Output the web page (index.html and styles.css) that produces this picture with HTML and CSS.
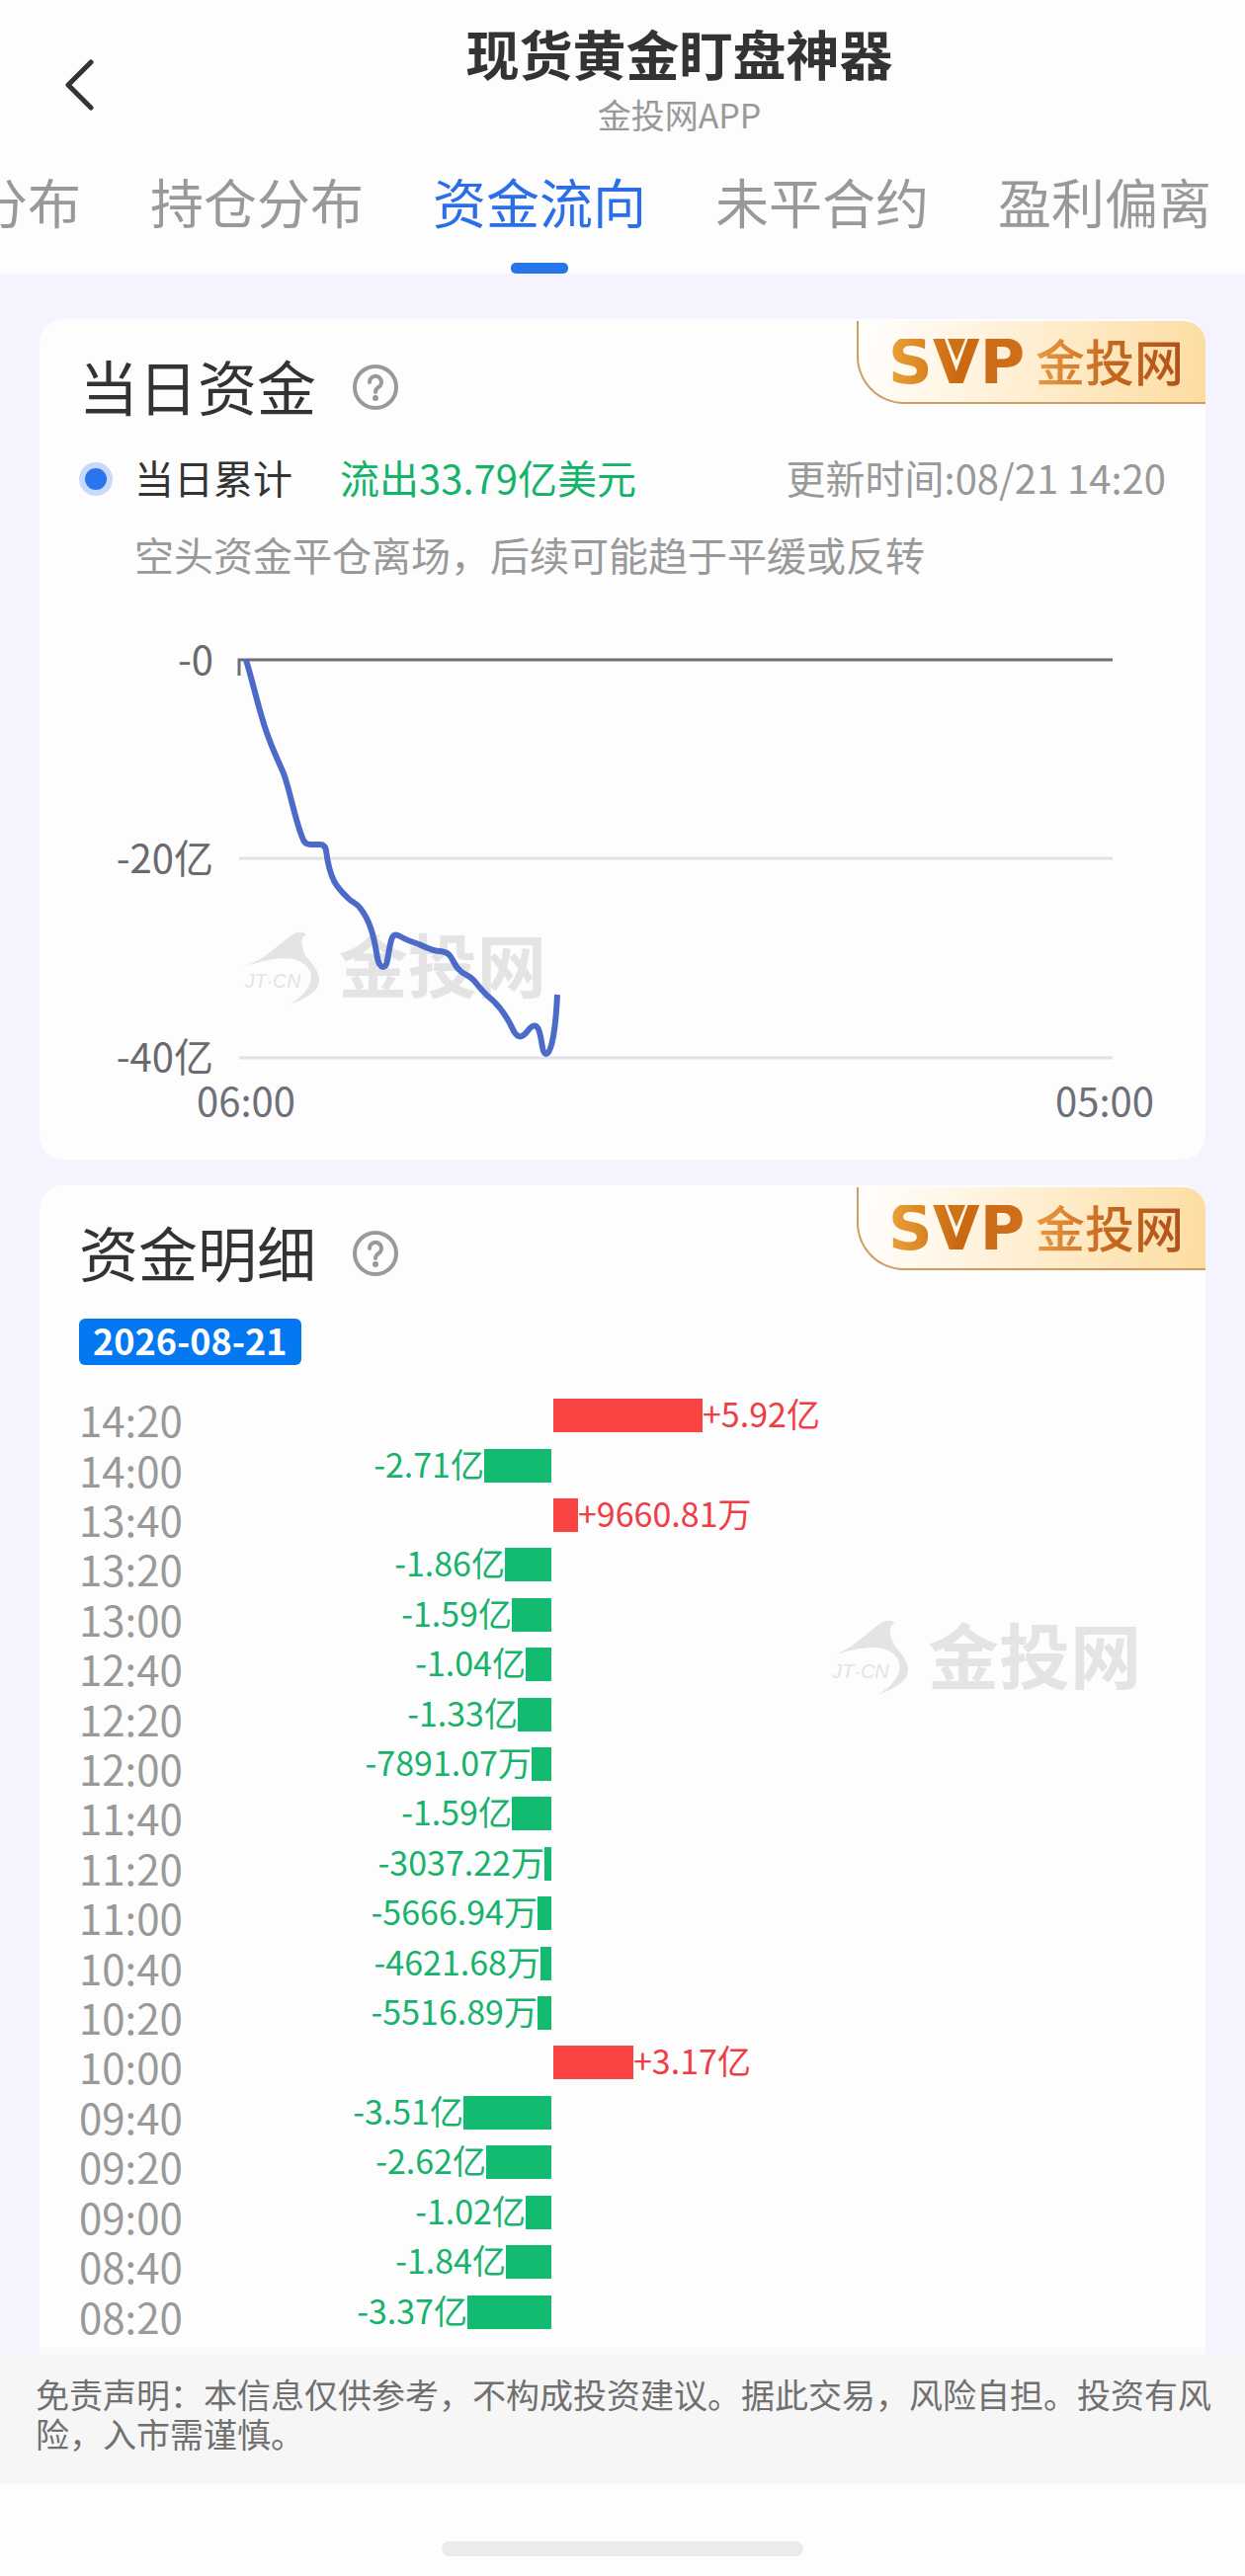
FILE: index.html
```html
<!DOCTYPE html>
<html lang="zh-CN">
<head>
    <meta charset="UTF-8">
    <meta name="viewport" content="width=device-width, initial-scale=1.0">
    <title>现货黄金盯盘神器</title>
    <link rel="stylesheet" href="styles.css">
</head>
<body>

    <header class="header">
        <div class="title-bar">
            <button class="back" type="button" aria-label="返回">
                <svg width="32" height="52" viewBox="0 0 32 52"><path d="M28 3L5 26L28 49" fill="none" stroke="#333" stroke-width="5" stroke-linecap="round" stroke-linejoin="round"/></svg>
            </button>
            <div class="titles">
                <h1>现货黄金盯盘神器</h1>
                <p>金投网APP</p>
            </div>
        </div>
        <nav class="tabs">
            <a href="#">分布</a>
            <a href="#">持仓分布</a>
            <a href="#" class="active" aria-current="page">资金流向</a>
            <a href="#">未平合约</a>
            <a href="#">盈利偏离</a>
        </nav>
    </header>

    <main class="content">

        <!-- Today's flow -->
        <section class="card">
            <div class="badge">
                <svg width="146" height="46" viewBox="0 0 146 46">
                    <defs>
                        <linearGradient id="gold" gradientUnits="userSpaceOnUse" x1="0" y1="0" x2="146" y2="0">
                            <stop offset="0" stop-color="#eda53a"/>
                            <stop offset="0.5" stop-color="#c96a12"/>
                            <stop offset="1" stop-color="#cf6f1c"/>
                        </linearGradient>
                    </defs>
                    <text class="svp-text" x="3" y="45">SVP</text>
                    <path d="M63 0H81L72 22Z" fill="#cd7216"/>
                </svg>
                <span>金投网</span>
            </div>
            <div class="card-title">
                <h2>当日资金</h2>
                <button type="button" aria-label="当日资金说明">
                    <svg width="48" height="48" viewBox="0 0 48 48">
                        <circle cx="24" cy="24" r="21" fill="none" stroke="#999" stroke-width="4"/>
                        <path d="M18 19a6 6 0 1 1 9 5q-3 2-3 5" fill="none" stroke="#999" stroke-width="4" stroke-linecap="round"/>
                        <circle cx="24" cy="35" r="3" fill="#999"/>
                    </svg>
                </button>
            </div>
            <div class="summary">
                <span class="dot"></span>
                <span class="summary-label">当日累计</span>
                <strong>流出33.79亿美元</strong>
                <time>更新时间:08/21 14:20</time>
            </div>
            <p class="hint">空头资金平仓离场，后续可能趋于平缓或反转</p>

            <svg class="chart" viewBox="0 0 1100 500" role="img" aria-label="当日资金走势">
                <svg x="166" y="302" width="308" height="76" viewBox="0 0 316 78">
                    <path class="wm-shape" d="M0 38Q16 32 25 25Q38 15 50 5Q58 -1 66 4Q60 6 61 15Q62 22 66 28C84 47 88 63 48 77C74 62 76 42 62 34C50 25 26 29 0 38Z"/>
                    <text class="wm-domain" x="2" y="60">JT·CN</text>
                    <text class="wm-name" x="99" y="65">金投网</text>
                </svg>
                <path class="grid" d="M162 229H1046M162 431H1046"/>
                <path class="axis" d="M162 44V28H1046"/>
                <path class="line" d="M169 28C175 48 179 66 185 86C192 112 200 126 207 143C214 162 218 188 226 208Q228 215 234 215L244 215Q249 215 250 221C254 253 262 259 273 270C277 274 281 274 285 280C294 292 298 305 302 330C304 341 311 342 312 332C316 310 316 303 325 308C332 312 335 313 344 316C358 322 360 323 366 323C380 325 376 335 386 343C391 348 394 346 400 353C410 366 412 367 420 374C430 384 435 393 440 404C444 411 448 411 453 405C458 398 462 396 465 402C469 412 468 427 473 427C477 427 482 410 484 367"/>
                <g class="y-labels">
                    <text x="136" y="43">-0</text>
                    <text x="136" y="244">-20亿</text>
                    <text x="136" y="445">-40亿</text>
                </g>
                <g class="x-labels">
                    <text x="169" y="490">06:00</text>
                    <text x="1038" y="490">05:00</text>
                </g>
            </svg>
        </section>

        <!-- Flow details -->
        <section class="card details">
            <div class="badge">
                <svg width="146" height="46" viewBox="0 0 146 46">
                    <text class="svp-text" x="3" y="45">SVP</text>
                    <path d="M63 0H81L72 22Z" fill="#cd7216"/>
                </svg>
                <span>金投网</span>
            </div>
            <div class="card-title">
                <h2>资金明细</h2>
                <button type="button" aria-label="资金明细说明">
                    <svg width="48" height="48" viewBox="0 0 48 48">
                        <circle cx="24" cy="24" r="21" fill="none" stroke="#999" stroke-width="4"/>
                        <path d="M18 19a6 6 0 1 1 9 5q-3 2-3 5" fill="none" stroke="#999" stroke-width="4" stroke-linecap="round"/>
                        <circle cx="24" cy="35" r="3" fill="#999"/>
                    </svg>
                </button>
            </div>
            <time class="date">2026-08-21</time>
            <svg class="watermark" width="316" height="78" viewBox="0 0 316 78" aria-hidden="true">
                <path class="wm-shape" d="M0 38Q16 32 25 25Q38 15 50 5Q58 -1 66 4Q60 6 61 15Q62 22 66 28C84 47 88 63 48 77C74 62 76 42 62 34C50 25 26 29 0 38Z"/>
                <text class="wm-domain" x="2" y="60">JT·CN</text>
                <text class="wm-name" x="99" y="65">金投网</text>
            </svg>

            <table class="flows">
                <colgroup><col class="col-time"><col class="col-out"><col></colgroup>
                <tbody>
                    <tr><th scope="row">14:20</th><td></td><td class="in"><div><i style="width: 151px"></i>+5.92亿</div></td></tr>
                    <tr><th scope="row">14:00</th><td class="out"><div>-2.71亿<i style="width: 68px"></i></div></td><td></td></tr>
                    <tr><th scope="row">13:40</th><td></td><td class="in"><div><i style="width: 25px"></i>+9660.81万</div></td></tr>
                    <tr><th scope="row">13:20</th><td class="out"><div>-1.86亿<i style="width: 47px"></i></div></td><td></td></tr>
                    <tr><th scope="row">13:00</th><td class="out"><div>-1.59亿<i style="width: 40px"></i></div></td><td></td></tr>
                    <tr><th scope="row">12:40</th><td class="out"><div>-1.04亿<i style="width: 26px"></i></div></td><td></td></tr>
                    <tr><th scope="row">12:20</th><td class="out"><div>-1.33亿<i style="width: 34px"></i></div></td><td></td></tr>
                    <tr><th scope="row">12:00</th><td class="out"><div>-7891.07万<i style="width: 20px"></i></div></td><td></td></tr>
                    <tr><th scope="row">11:40</th><td class="out"><div>-1.59亿<i style="width: 40px"></i></div></td><td></td></tr>
                    <tr><th scope="row">11:20</th><td class="out"><div>-3037.22万<i style="width: 7px"></i></div></td><td></td></tr>
                    <tr><th scope="row">11:00</th><td class="out"><div>-5666.94万<i style="width: 14px"></i></div></td><td></td></tr>
                    <tr><th scope="row">10:40</th><td class="out"><div>-4621.68万<i style="width: 11px"></i></div></td><td></td></tr>
                    <tr><th scope="row">10:20</th><td class="out"><div>-5516.89万<i style="width: 14px"></i></div></td><td></td></tr>
                    <tr><th scope="row">10:00</th><td></td><td class="in"><div><i style="width: 81px"></i>+3.17亿</div></td></tr>
                    <tr><th scope="row">09:40</th><td class="out"><div>-3.51亿<i style="width: 89px"></i></div></td><td></td></tr>
                    <tr><th scope="row">09:20</th><td class="out"><div>-2.62亿<i style="width: 66px"></i></div></td><td></td></tr>
                    <tr><th scope="row">09:00</th><td class="out"><div>-1.02亿<i style="width: 26px"></i></div></td><td></td></tr>
                    <tr><th scope="row">08:40</th><td class="out"><div>-1.84亿<i style="width: 46px"></i></div></td><td></td></tr>
                    <tr><th scope="row">08:20</th><td class="out"><div>-3.37亿<i style="width: 85px"></i></div></td><td></td></tr>
                </tbody>
            </table>
        </section>
    </main>

    <footer class="disclaimer">
        <p>免责声明：本信息仅供参考，不构成投资建议。据此交易，风险自担。投资有风险，入市需谨慎。</p>
    </footer>
    <div class="home-bar"><span></span></div>

</body>
</html>
```

FILE: styles.css
```css
* {
    box-sizing: border-box;
}

body {
    margin: 0;
    background-color: #fdfdfd;
    color: #333;
    font-family: "Noto Sans CJK SC", sans-serif;
    font-size: 40px;
}

h1, h2, p {
    margin: 0;
}

button {
    display: flex;
    padding: 0;
    border: none;
    background: none;
    cursor: pointer;
}

/* Header */
.header {
    background-color: #fdfdfd;
    border-radius: 0 0 10px 10px;
    overflow: hidden;
}

.title-bar {
    display: flex;
    padding-top: 24px;
}

.back {
    width: 115px;
    padding: 36px 0 0 64px;
}

.titles {
    flex: 1;
    text-align: center;
}

.titles h1 {
    font-size: 54px;
    line-height: 60px;
}

.titles p {
    margin-top: 10px;
    font-size: 34px;
    line-height: 44px;
    color: #999;
}

.tabs {
    display: flex;
    gap: 70px;
    margin: 34px 0 0 -26px;
}

.tabs a {
    flex: none;
    display: flex;
    flex-direction: column;
    align-items: center;
    font-size: 54px;
    line-height: 64px;
    color: #999;
    text-decoration: none;
}

.tabs a::after {
    content: "";
    width: 58px;
    height: 11px;
    margin-top: 30px;
    border-radius: 5px;
}

.tabs .active {
    color: #2b6fe8;
}

.tabs .active::after {
    background-color: #2676ea;
}

/* Cards */
.content {
    padding: 46px 40px 0;
    background-color: #f5f4fe;
}

.card {
    position: relative;
    padding: 39px 40px 34px;
    border-radius: 24px;
    background-color: #fdfdfd;
}

.card-title {
    display: flex;
    align-items: center;
    gap: 36px;
}

.card-title h2 {
    padding-bottom: 4px;
    font-size: 60px;
    font-weight: 400;
    line-height: 56px;
}

.badge {
    position: absolute;
    top: 2px;
    right: 0;
    display: flex;
    align-items: center;
    gap: 6px;
    height: 84px;
    padding: 0 22px 0 27px;
    border: solid #cf9c63;
    border-width: 0 0 2px 2px;
    border-radius: 0 22px 0 48px;
    background: linear-gradient(100deg, #fffdfa 5%, #fff0d5 45%, #fddca0 100%);
}

.badge span {
    padding-bottom: 4px;
    font-size: 50px;
    font-weight: 500;
    line-height: 60px;
    color: transparent;
    background: linear-gradient(90deg, #e79a45, #c7681f 50%, #b0501c);
    background-clip: text;
    -webkit-background-clip: text;
}

.svp-text {
    font: bold 62px "DejaVu Sans", sans-serif;
    fill: url(#gold);
}

.summary {
    display: flex;
    align-items: center;
    margin-top: 39px;
    line-height: 44px;
}

.dot {
    width: 34px;
    height: 34px;
    border: 6px solid #c8dafa;
    border-radius: 50%;
    background-color: #2b74ee;
}

.summary-label {
    margin-left: 22px;
    padding-bottom: 4px;
}

.summary strong {
    margin-left: 48px;
    padding-bottom: 4px;
    font-weight: 400;
    color: #14b36b;
}

.summary time {
    margin-left: auto;
    padding-bottom: 4px;
    color: #999;
}

.hint {
    margin-top: 28px;
    padding-left: 56px;
    line-height: 48px;
    color: #999;
}

/* Line chart */
.chart {
    display: block;
    width: 100%;
    margin-top: 55px;
}

.chart path {
    fill: none;
}

.chart .grid {
    stroke: #e1e2e5;
    stroke-width: 3;
}

.chart .axis {
    stroke: #6e7079;
    stroke-width: 3;
}

.chart .line {
    stroke: #4c6bc8;
    stroke-width: 6;
    stroke-linejoin: round;
}

.y-labels {
    fill: #6a6a6e;
    text-anchor: end;
}

.x-labels {
    fill: #6e7079;
    text-anchor: middle;
}

.wm-shape, .chart .wm-shape {
    fill: #e4e4e4;
}

.wm-domain {
    font: italic 20px "Liberation Sans", sans-serif;
    fill: #e4e4e4;
}

.wm-name {
    font-size: 72px;
    font-weight: 700;
    fill: #e4e4e4;
}

/* Flow table */
.details {
    margin-top: 26px;
    padding-bottom: 10px;
    border-bottom: 8px solid #fafafa;
    border-radius: 24px 24px 0 0;
}

.date {
    display: block;
    width: fit-content;
    margin-top: 36px;
    padding: 0 14px 4px;
    border-radius: 6px;
    background-color: #0478f0;
    color: #fff;
    font-size: 36px;
    font-weight: 700;
    line-height: 43px;
}

.watermark {
    position: absolute;
    top: 439px;
    right: 64px;
}

.flows {
    width: 100%;
    height: 958px;
    margin-top: 26px;
    border-collapse: collapse;
    table-layout: fixed;
}

.col-time {
    width: 140px;
}

.col-out {
    width: 338px;
}

.flows th, .flows td {
    padding: 0;
}

.flows th {
    padding-top: 8px;
    color: #999;
    font-size: 42px;
    font-weight: 400;
    line-height: 34px;
    text-align: left;
}

.flows td div {
    display: flex;
    align-items: flex-start;
    font-size: 34px;
    line-height: 30px;
    white-space: nowrap;
}

.flows i {
    flex: none;
    height: 34px;
}

.flows .out div {
    justify-content: flex-end;
    color: #17b26b;
}

.flows .out i {
    background-color: #13bb70;
}

.flows .in {
    padding-left: 2px;
    color: #f03c46;
}

.flows .in i {
    background-color: #fa4343;
}

/* Footer */
.disclaimer {
    padding: 20px 34px 31px 36px;
    background-color: #f6f6f6;
    color: #707070;
    font-size: 34px;
    line-height: 40px;
}

.home-bar {
    display: flex;
    justify-content: center;
    padding: 58px 0 20px;
}

.home-bar span {
    width: 29%;
    height: 15px;
    border-radius: 8px;
    background-color: #ebebeb;
}
```
